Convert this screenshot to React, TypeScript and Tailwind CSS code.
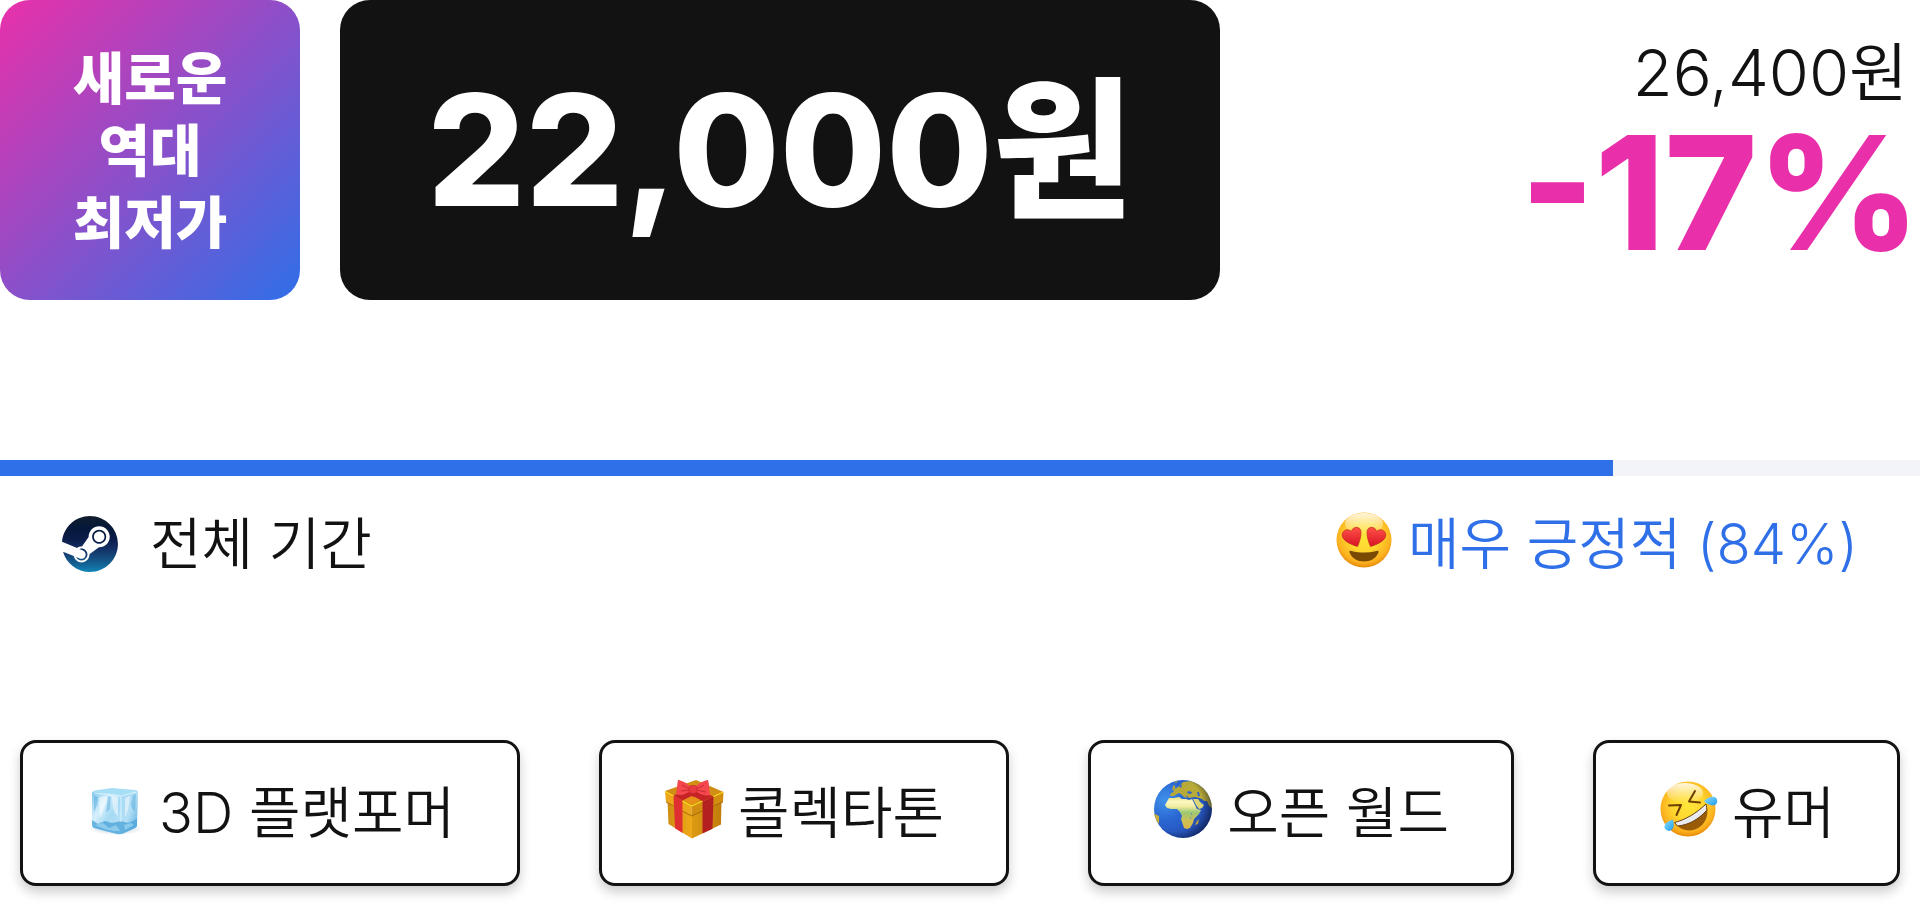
import type { ReactNode } from "react";

const LABEL_FONT = "font-['Inter','Noto_Sans_CJK_KR',sans-serif]";

function SteamLogo() {
  return (
    <svg viewBox="0 0 24 24" className="size-14 shrink-0" aria-hidden="true">
      <defs>
        <linearGradient id="steam" x1="0" y1="0" x2="0" y2="1">
          <stop offset="0" stopColor="#111d2e" />
          <stop offset="0.21" stopColor="#051839" />
          <stop offset="0.4" stopColor="#0a1b48" />
          <stop offset="0.58" stopColor="#132e62" />
          <stop offset="0.74" stopColor="#144b7e" />
          <stop offset="0.87" stopColor="#136497" />
          <stop offset="1" stopColor="#1387b8" />
        </linearGradient>
      </defs>
      <path
        fill="url(#steam)"
        d="M11.979 0C5.678 0 .511 4.86.022 11.037l6.432 2.658c.545-.371 1.203-.59 1.912-.59.063 0 .125.004.188.006l2.861-4.142V8.91c0-2.495 2.028-4.524 4.524-4.524 2.494 0 4.524 2.031 4.524 4.527s-2.03 4.525-4.524 4.525h-.105l-4.076 2.911c0 .052.004.105.004.159 0 1.875-1.515 3.396-3.39 3.396-1.635 0-3.016-1.173-3.331-2.727L.436 15.27C1.862 20.307 6.486 24 11.979 24c6.627 0 11.999-5.373 11.999-12S18.605 0 11.979 0zM7.54 18.21l-1.473-.61c.262.543.714.999 1.314 1.25 1.297.539 2.793-.076 3.332-1.375.263-.63.264-1.319.005-1.949s-.75-1.121-1.377-1.383c-.624-.26-1.29-.249-1.878-.03l1.523.63c.956.4 1.409 1.5 1.009 2.455-.397.957-1.497 1.41-2.454 1.012H7.54zm11.415-9.303c0-1.662-1.353-3.015-3.015-3.015-1.665 0-3.015 1.353-3.015 3.015 0 1.665 1.35 3.015 3.015 3.015 1.663 0 3.015-1.35 3.015-3.015zm-5.273-.005c0-1.252 1.013-2.266 2.265-2.266 1.249 0 2.266 1.014 2.266 2.266 0 1.251-1.017 2.265-2.266 2.265-1.253 0-2.265-1.014-2.265-2.265z"
      />
    </svg>
  );
}

function FaceGradient({ id }: { id: string }) {
  return (
    <defs>
      <radialGradient id={id} cx="0.5" cy="0.42" r="0.6">
        <stop offset="0" stopColor="#ffe63a" />
        <stop offset="0.5" stopColor="#ffd52e" />
        <stop offset="0.82" stopColor="#fbb01e" />
        <stop offset="1" stopColor="#e08206" />
      </radialGradient>
      <linearGradient id={id + "-shine"} x1="0" y1="0" x2="0" y2="1">
        <stop offset="0" stopColor="#fff" stopOpacity="0.85" />
        <stop offset="1" stopColor="#fff" stopOpacity="0" />
      </linearGradient>
    </defs>
  );
}

function HeartEyes() {
  return (
    <svg viewBox="0 0 60 60" className="mb-2 size-15 shrink-0" aria-hidden="true">
      <FaceGradient id="love" />
      <defs>
        <linearGradient id="heart" x1="0" y1="0" x2="0" y2="1">
          <stop offset="0" stopColor="#ff5148" />
          <stop offset="1" stopColor="#d91424" />
        </linearGradient>
      </defs>
      <circle cx="30" cy="30" r="27.5" fill="url(#love)" />
      <ellipse cx="30" cy="14" rx="19" ry="11" fill="url(#love-shine)" />
      <path fill="url(#heart)" stroke="#b9241b" strokeWidth="0.6" d="M23.5 36.5C17 34.5 9.5 31.5 8.3 26C7.2 20.5 14 17.5 17.3 21.5C18.6 16 26.6 15.8 27 21.8C27.3 27 25.3 32.5 23.5 36.5Z" />
      <path fill="url(#heart)" stroke="#b9241b" strokeWidth="0.6" d="M36.5 36.5C43 34.5 50.5 31.5 51.7 26C52.8 20.5 46 17.5 42.7 21.5C41.4 16 33.4 15.8 33 21.8C32.7 27 34.7 32.5 36.5 36.5Z" />
      <path fill="#7a4a05" d="M15.5 42.5C15 41 16 40.6 17.5 41C26 43 34 43 42.5 41C44 40.6 45 41 44.5 42.5C42 48.5 36.5 51.5 30 51.5S18 48.5 15.5 42.5Z" />
    </svg>
  );
}

function RollingLaugh() {
  return (
    <svg viewBox="0 0 60 60" className="mb-2 size-15 shrink-0" aria-hidden="true">
      <FaceGradient id="laugh" />
      <defs>
        <linearGradient id="tear" x1="0" y1="0" x2="1" y2="1">
          <stop offset="0" stopColor="#8fe0ff" />
          <stop offset="1" stopColor="#1c9bea" />
        </linearGradient>
      </defs>
      <circle cx="30" cy="30" r="27.5" fill="url(#laugh)" />
      <ellipse cx="27" cy="14" rx="18" ry="10" fill="url(#laugh-shine)" />
      <g fill="none" stroke="#6d3f04" strokeWidth="2" strokeLinejoin="round" strokeLinecap="round">
        <path d="M11 26.5L23 26L18.5 36" />
        <path d="M37 12L31 22.5L42 23.5" />
      </g>
      <path fill="#9a5b08" d="M16.5 43.5C28 40.5 38 34.5 48 25C51.5 34 48.5 43.5 41 48.5C32.5 54 22 51.5 16.5 43.5Z" />
      <path fill="#e9ebf0" stroke="#5d3704" strokeWidth="0.9" d="M16.5 43.5C28 40.5 38 34.5 48 25C48.7 27.5 49 30 48.5 31.5C40 41 30 46 19.5 47Z" />
      <path fill="url(#tear)" d="M46 22C49.5 18.5 54 16.5 57.5 18.5C60 20.5 59.8 24.5 57 26C53.5 27.6 49 25 46 22Z" />
      <path fill="url(#tear)" d="M14.8 40.5C9.5 42 6 45 6.5 48.6C7 51.5 11.5 53.2 14 50.6C16.5 48 16 44 14.8 40.5Z" />
    </svg>
  );
}

function IceCube() {
  return (
    <svg viewBox="0 0 60 60" className="mb-2 size-15 shrink-0" aria-hidden="true">
      <defs>
        <linearGradient id="ice-l" x1="0" y1="0" x2="1" y2="1">
          <stop offset="0" stopColor="#7cc4ec" />
          <stop offset="0.35" stopColor="#d6f0fc" />
          <stop offset="0.6" stopColor="#a5d9f4" />
          <stop offset="1" stopColor="#c4e8f9" />
        </linearGradient>
        <linearGradient id="ice-r" x1="0" y1="0" x2="1" y2="1">
          <stop offset="0" stopColor="#a2d8f3" />
          <stop offset="0.5" stopColor="#b2dff5" />
          <stop offset="1" stopColor="#56a9dc" />
        </linearGradient>
        <radialGradient id="ice-s">
          <stop offset="0" stopColor="#8aa9bd" stopOpacity="0.6" />
          <stop offset="1" stopColor="#8aa9bd" stopOpacity="0" />
        </radialGradient>
      </defs>
      <ellipse cx="31" cy="50" rx="27" ry="6" fill="url(#ice-s)" />
      <path fill="url(#ice-l)" d="M7 15Q7 12 10 12L36 14V55Q34 56 31 55L9 49Q7 48 7 45Z" />
      <path fill="url(#ice-r)" d="M36 14L50 11Q53 11 53 14L52 46Q52 48 50 49L37 55L36 55Z" />
      <path fill="#a6def5" d="M8 13Q9 11 13 11L27 9L50 11Q53 12 51 13L37 16Z" />
      <path fill="#4fa5d9" opacity="0.8" d="M7 41L13 45L20 42L27 44L36 42L43 44L52 40V46Q52 48 50 49L37 55H32L9 49Q7 48 7 45Z" />
      <path fill="#a9dcf5" opacity="0.6" d="M10 46L18 44L24 49L31 46L35 52L29 52L19 50ZM39 46L46 44L49 46L40 51Z" />
      <path fill="#fff" opacity="0.5" d="M14 19Q18 16 22 18Q20 30 15 39ZM27 17L33 18L33 37Q29 34 28 30ZM40 19L45 17Q44 32 40 38Z" />
      <path fill="#4fa6dc" opacity="0.45" d="M9 17L13 18Q13 26 9 33ZM23 17L26 18L25 30L21 34ZM48 16L51 15L50 32Q46 30 46 25Z" />
      <path fill="none" stroke="#d8f3fd" strokeWidth="1" d="M9 14L36 17L51 13M36 17V43" />
    </svg>
  );
}

function Gift() {
  return (
    <svg viewBox="0 0 60 60" className="mb-2 size-15 shrink-0" aria-hidden="true">
      <defs>
        <linearGradient id="gift-l" x1="0" y1="0" x2="1" y2="0">
          <stop offset="0" stopColor="#cf8d12" />
          <stop offset="1" stopColor="#efaa18" />
        </linearGradient>
        <linearGradient id="gift-r" x1="0" y1="0" x2="1" y2="0">
          <stop offset="0" stopColor="#dc9a14" />
          <stop offset="1" stopColor="#c27d0c" />
        </linearGradient>
      </defs>
      <path fill="url(#gift-l)" d="M3.5 22L28 35V59.5L4.5 45Z" />
      <path fill="url(#gift-r)" d="M28 35L57.5 21L57 45.5L28 59.5Z" />
      <path fill="#d08f14" d="M1 12L32 1L59.5 13L27.5 27Z" />
      <path fill="#eba619" d="M1 12L27.5 27V37L2 23Z" />
      <path fill="#d18d10" d="M27.5 27L59.5 13L59 23L27.5 37Z" />
      <path fill="#e02f31" d="M9.5 16.5L18.5 21.5V54L11 49.3Z" />
      <path fill="#b42020" d="M38.5 22.5L49.5 17.5L48.5 49.7L38.5 54.5Z" />
      <path fill="#c62325" d="M9.5 16.5L24 11L36 16L18.5 21.5ZM24 14L34 11L49.5 17.5L38.5 22.5Z" />
      <path fill="#e8901a" d="M27.5 17L36 20.5L27.5 25.5L19.5 21Z" />
      <path fill="none" stroke="#f7d51e" strokeWidth="1.3" d="M1 12.5L9.5 17M18.5 22L27.5 27L38.5 22M49.5 17.5L59.5 13" />
      <path fill="none" stroke="#99610a" strokeWidth="0.8" d="M2 23L9.8 27M18.5 32L27.5 37L38.5 32M49.5 27L59 23" />
      <path fill="#f4484e" d="M27 8C22 3 16 1 14 1C13 5 13.5 9 12 15C17 18 23 14 27 12ZM31 8C36 3 42 1 44 1C45.5 6 45 11 46 16C40 18 35 14 31 12Z" />
      <path fill="none" stroke="#c3262d" strokeWidth="0.9" d="M18 6L26 10M17 12L26 11M40 6L32 10M42 13L32 11" />
      <rect x="25" y="6.5" width="8" height="8" rx="3" fill="#e93940" stroke="#bd242a" strokeWidth="0.6" />
    </svg>
  );
}

function Globe() {
  return (
    <svg viewBox="0 0 60 60" className="mb-2 size-15 shrink-0" aria-hidden="true">
      <defs>
        <radialGradient id="sea" cx="0.2" cy="0.35" r="0.85">
          <stop offset="0" stopColor="#3f93ea" />
          <stop offset="0.4" stopColor="#2a66d2" />
          <stop offset="1" stopColor="#2246a8" />
        </radialGradient>
        <linearGradient id="land" x1="0" y1="0" x2="0" y2="1">
          <stop offset="0" stopColor="#e9e27c" />
          <stop offset="0.15" stopColor="#fbf8c4" />
          <stop offset="0.3" stopColor="#f0eca0" />
          <stop offset="0.48" stopColor="#9dc873" />
          <stop offset="0.75" stopColor="#cfc055" />
          <stop offset="1" stopColor="#d6b545" />
        </linearGradient>
        <radialGradient id="shade" cx="0.38" cy="0.43" r="0.65">
          <stop offset="0.7" stopColor="#06102a" stopOpacity="0" />
          <stop offset="1" stopColor="#06102a" stopOpacity="0.6" />
        </radialGradient>
        <clipPath id="ball">
          <circle cx="30" cy="30" r="29" />
        </clipPath>
      </defs>
      <g clipPath="url(#ball)">
        <rect width="60" height="60" fill="url(#sea)" />
        <path fill="url(#land)" d="M16 19L21 19L26 18L29 20L33 20L36 21L39 20L41 24L44 30L48 31L46 35L41 40L40 44L37 49L34 50L31 49L29 43L28 40L29 37L27 33L24 30L18 30L14 29L12 26Z" />
        <path fill="#b8aa38" d="M17 17L18 14L21 13L20 11L25 8L30 3L38 2L46 5L54 12L59 21L60 30L56 27L54 22L51 22L49 20L46 19L42 18L36 19L33 16L34 19L31 18L28 15L26 14L24 15L21 17Z" />
        <path fill="#2f63cb" d="M35 12L39 13L38 15L34 14ZM44 13L46 13L47 17L45 17ZM26 7L29 5L28 9ZM49 23L51 25L49 26L47 23Z" />
        <path fill="#ddd678" d="M40 20L45 20L48 24L51 26L49 29L46 30L43 26Z" />
        <path fill="#c9ab38" d="M0 34L2 35L6 37L6 43L4 48L0 44ZM44 42L46 40L45 45L42 46Z" />
        <path fill="#b9a836" d="M20 7L22 6L22 10L19 11ZM21 3L25 2L23 4Z" />
        <path fill="none" stroke="#4f87dc" strokeWidth="0.8" d="M38 34L39 36M37 38L38 40" />
        <circle cx="30" cy="30" r="29" fill="url(#shade)" />
      </g>
    </svg>
  );
}

function Hangul({ children }: { children: ReactNode }) {
  return <span className="font-[350]">{children}</span>;
}

const tags = [
  { icon: <IceCube />, prefix: "3D ", name: "플랫포머" },
  { icon: <Gift />, prefix: "", name: "콜렉타톤" },
  { icon: <Globe />, prefix: "", name: "오픈 월드" },
  { icon: <RollingLaugh />, prefix: "", name: "유머" },
];

export default function App() {
  return (
    <main className={LABEL_FONT + " w-full overflow-hidden bg-white pb-5 font-light text-[#121212]"} lang="ko">
      <section className="flex h-[300px] items-stretch gap-10">
        <div className="flex w-[300px] shrink-0 items-center justify-center rounded-[30px] bg-linear-135/srgb from-[#e930aa] to-[#2f6fe8] pt-0.5 text-center text-[56px] leading-[72px] font-extrabold text-white">
          <p>
            새로운
            <br />
            역대
            <br />
            최저가
          </p>
        </div>
        <div className="flex w-[880px] shrink-0 items-center justify-center rounded-[30px] bg-[#121212] text-[154px] leading-none font-extrabold whitespace-nowrap text-white">
          <span>22,000<span className="text-[152px]">원</span></span>
        </div>
        <div className="flex grow flex-col items-end justify-center pt-1.5 whitespace-nowrap">
          <del className="pr-3 text-[65px] leading-[80px] no-underline">26,400<span className="text-[64px] font-[350]">원</span></del>
          <strong className="text-[158px] leading-[160px] font-extrabold text-[#e930aa]">-17%</strong>
        </div>
      </section>

      <section className="mt-40">
        <div className="h-4 bg-[#f3f4f9]" role="progressbar" aria-label="긍정적 평가 비율" aria-valuenow={84} aria-valuemin={0} aria-valuemax={100}>
          <div className="h-full bg-[#2f6fe8]" style={{ width: "84%" }} />
        </div>
        <div className="flex h-34 items-center justify-between px-[62px] text-[56px] leading-none whitespace-nowrap">
          <div className="flex items-center gap-8">
            <SteamLogo />
            <Hangul>전체 기간</Hangul>
          </div>
          <div className="flex items-center gap-3.5 text-[#2f6fe8]">
            <HeartEyes />
            <span className="font-[350]">매우 긍정적 (84%)</span>
          </div>
        </div>
      </section>

      <section className="mt-32 flex justify-between px-5">
        {tags.map((tag) => (
          <button
            key={tag.name}
            type="button"
            className="flex h-[146px] items-center gap-3.5 rounded-2xl border-3 border-[#121212] bg-white px-[62px] text-[56px] leading-none font-[350] whitespace-nowrap shadow-[0_6px_12px_rgba(0,0,0,0.2)]"
          >
            {tag.icon}
            <span className="whitespace-pre">{tag.prefix}{tag.name}</span>
          </button>
        ))}
      </section>
    </main>
  );
}
